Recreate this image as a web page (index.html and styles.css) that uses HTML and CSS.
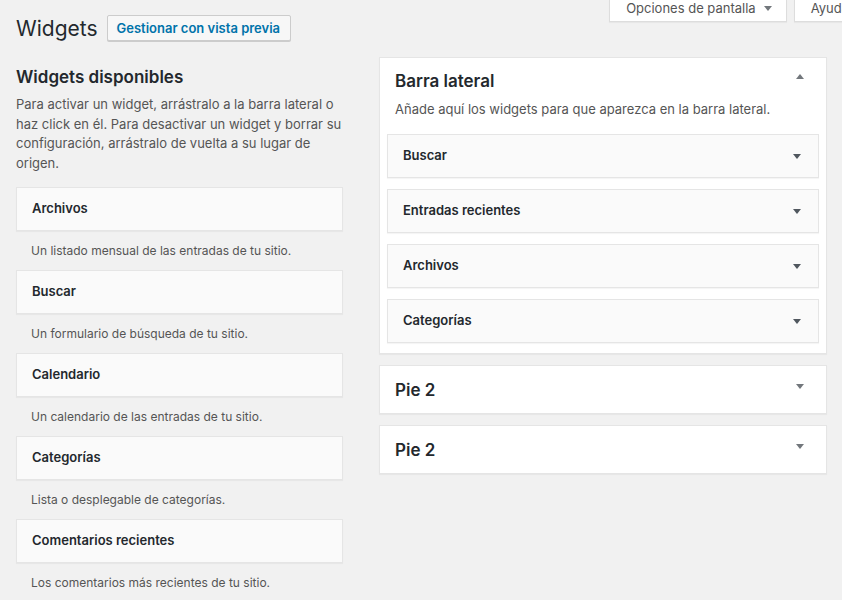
FILE: index.html
```html
<!DOCTYPE html>
<html lang="es">
<head>
<meta charset="utf-8">
<title>Widgets</title>
<link rel="stylesheet" href="styles.css">
</head>
<body>
<div class="page">
  <div class="top">
    <div class="heading">
      <h1 class="title">Widgets</h1>
      <a class="btn">Gestionar con vista previa</a>
    </div>
    <div class="screen-meta">
      <div class="tab">Opciones de pantalla <span class="caret"></span></div>
      <div class="tab">Ayuda <span class="caret"></span></div>
    </div>
  </div>

  <div class="columns">
    <div class="available">
      <h2 class="avail-title">Widgets disponibles</h2>
      <p class="avail-desc">Para activar un widget, arrástralo a la barra lateral o haz click en él. Para desactivar un widget y borrar su configuración, arrástralo de vuelta a su lugar de origen.</p>
      <ul class="widget-list">
        <li class="widget-item">
          <div class="widget-box">Archivos</div>
          <p class="widget-desc">Un listado mensual de las entradas de tu sitio.</p>
        </li>
        <li class="widget-item">
          <div class="widget-box">Buscar</div>
          <p class="widget-desc">Un formulario de búsqueda de tu sitio.</p>
        </li>
        <li class="widget-item">
          <div class="widget-box">Calendario</div>
          <p class="widget-desc">Un calendario de las entradas de tu sitio.</p>
        </li>
        <li class="widget-item">
          <div class="widget-box">Categorías</div>
          <p class="widget-desc">Lista o desplegable de categorías.</p>
        </li>
        <li class="widget-item">
          <div class="widget-box">Comentarios recientes</div>
          <p class="widget-desc">Los comentarios más recientes de tu sitio.</p>
        </li>
      </ul>
    </div>

    <div class="sidebars">
      <section class="sidebar sidebar-open">
        <div class="sidebar-head">
          <h2 class="sidebar-title">Barra lateral</h2>
          <span class="caret caret-up"></span>
        </div>
        <p class="sidebar-desc">Añade aquí los widgets para que aparezca en la barra lateral.</p>
        <div class="sidebar-widgets">
          <div class="in-widget"><span>Buscar</span><span class="caret caret-dark"></span></div>
          <div class="in-widget"><span>Entradas recientes</span><span class="caret caret-dark"></span></div>
          <div class="in-widget"><span>Archivos</span><span class="caret caret-dark"></span></div>
          <div class="in-widget"><span>Categorías</span><span class="caret caret-dark"></span></div>
        </div>
      </section>
      <section class="sidebar sidebar-closed">
        <h2 class="sidebar-title">Pie 2</h2>
        <span class="caret"></span>
      </section>
      <section class="sidebar sidebar-closed">
        <h2 class="sidebar-title">Pie 2</h2>
        <span class="caret"></span>
      </section>
    </div>
  </div>
</div>
</body>
</html>
```

FILE: styles.css
```css
html, body {
  margin: 0;
  padding: 0;
  overflow: hidden;
}
body {
  background: #f1f1f1;
  color: #444;
  font-family: Inter, "Noto Sans", "Liberation Sans", sans-serif;
  font-size: 13px;
  line-height: 1.5;
  width: 842px;
  height: 600px;
}
.page {
  padding: 0 15px 0 16px;
}
.top {
  display: flex;
  justify-content: space-between;
  align-items: flex-start;
}
.heading {
  display: flex;
  align-items: flex-start;
  margin-top: 14px;
}
.title {
  margin: 0;
  font-size: 21px;
  line-height: 29px;
  font-weight: 400;
  color: #23282d;
}
.btn {
  margin: 1px 0 0 9px;
  height: 26px;
  box-sizing: border-box;
  padding: 0 10px 0 9px;
  border: 1px solid #ccc;
  border-radius: 2px;
  background: #f7f7f7;
  color: #0073aa;
  font-size: 13px;
  font-weight: 600;
  line-height: 24px;
  box-shadow: 0 1px 0 #ccc;
}
.screen-meta {
  display: flex;
  gap: 7px;
  margin-right: -53px;
}
.tab {
  height: 22px;
  box-sizing: border-box;
  padding: 0 14px 4px 16px;
  background: #fff;
  border: 1px solid #ddd;
  border-top: 0;
  box-shadow: 0 1px 1px rgba(0,0,0,.04);
  color: #555;
  font-size: 13px;
  line-height: 17px;
  display: flex;
  align-items: center;
  gap: 8px;
}
.caret {
  display: inline-block;
  flex: none;
  width: 0;
  height: 0;
  border-left: 4px solid transparent;
  border-right: 4px solid transparent;
  border-top: 5px solid #72777c;
}
.caret-up {
  border-top: 0;
  border-bottom: 5px solid #72777c;
}
.caret-dark {
  border-top-color: #50575e;
}
.columns {
  display: flex;
  gap: 36px;
  align-items: flex-start;
}
.available {
  width: 327px;
  flex: none;
}
.avail-title {
  margin: 21px 0 0;
  font-size: 17px;
  line-height: 26px;
  font-weight: 600;
  color: #23282d;
}
.avail-desc {
  margin: 5px 0 0;
  font-size: 13px;
  line-height: 19.5px;
  color: #555;
}
.widget-list {
  list-style: none;
  margin: 14px 0 0;
  padding: 0;
}
.widget-box {
  height: 44px;
  box-sizing: border-box;
  border: 1px solid #e5e5e5;
  background: #fafafa;
  box-shadow: 0 1px 1px rgba(0,0,0,.04);
  padding: 0 15px;
  display: flex;
  align-items: center;
  font-weight: 600;
  font-size: 13px;
  color: #23282d;
}
.widget-desc {
  margin: 0;
  padding: 10px 15px;
  line-height: 19px;
  font-size: 12px;
  color: #555;
}
.sidebars {
  width: 448px;
  flex: none;
  margin-top: 14px;
  display: flex;
  flex-direction: column;
  gap: 11px;
}
.sidebar {
  background: #fff;
  border: 1px solid #e5e5e5;
  box-shadow: 0 1px 1px rgba(0,0,0,.04);
  box-sizing: border-box;
}
.sidebar-open {
  padding: 0 7px 10px;
}
.sidebar-head {
  display: flex;
  justify-content: space-between;
  align-items: flex-start;
  padding: 10px 15px 0 8px;
}
.sidebar-head .caret {
  margin-top: 6px;
}
.sidebar-title {
  margin: 0;
  font-size: 17px;
  line-height: 26px;
  font-weight: 600;
  color: #23282d;
}
.sidebar-desc {
  margin: 6px 0 15px;
  padding: 0 8px;
  font-size: 13px;
  line-height: 19px;
  color: #555;
}
.sidebar-widgets {
  display: flex;
  flex-direction: column;
  gap: 11px;
}
.in-widget {
  height: 44px;
  box-sizing: border-box;
  border: 1px solid #e5e5e5;
  background: #fafafa;
  box-shadow: 0 1px 1px rgba(0,0,0,.04);
  padding: 0 17px 0 15px;
  display: flex;
  justify-content: space-between;
  align-items: center;
  font-weight: 600;
  font-size: 13px;
  color: #23282d;
}
.sidebar-closed {
  height: 49px;
  display: flex;
  justify-content: space-between;
  align-items: center;
  padding: 0 22px 0 15px;
}
.sidebar-closed .caret {
  align-self: flex-start;
  margin-top: 18px;
}
```
